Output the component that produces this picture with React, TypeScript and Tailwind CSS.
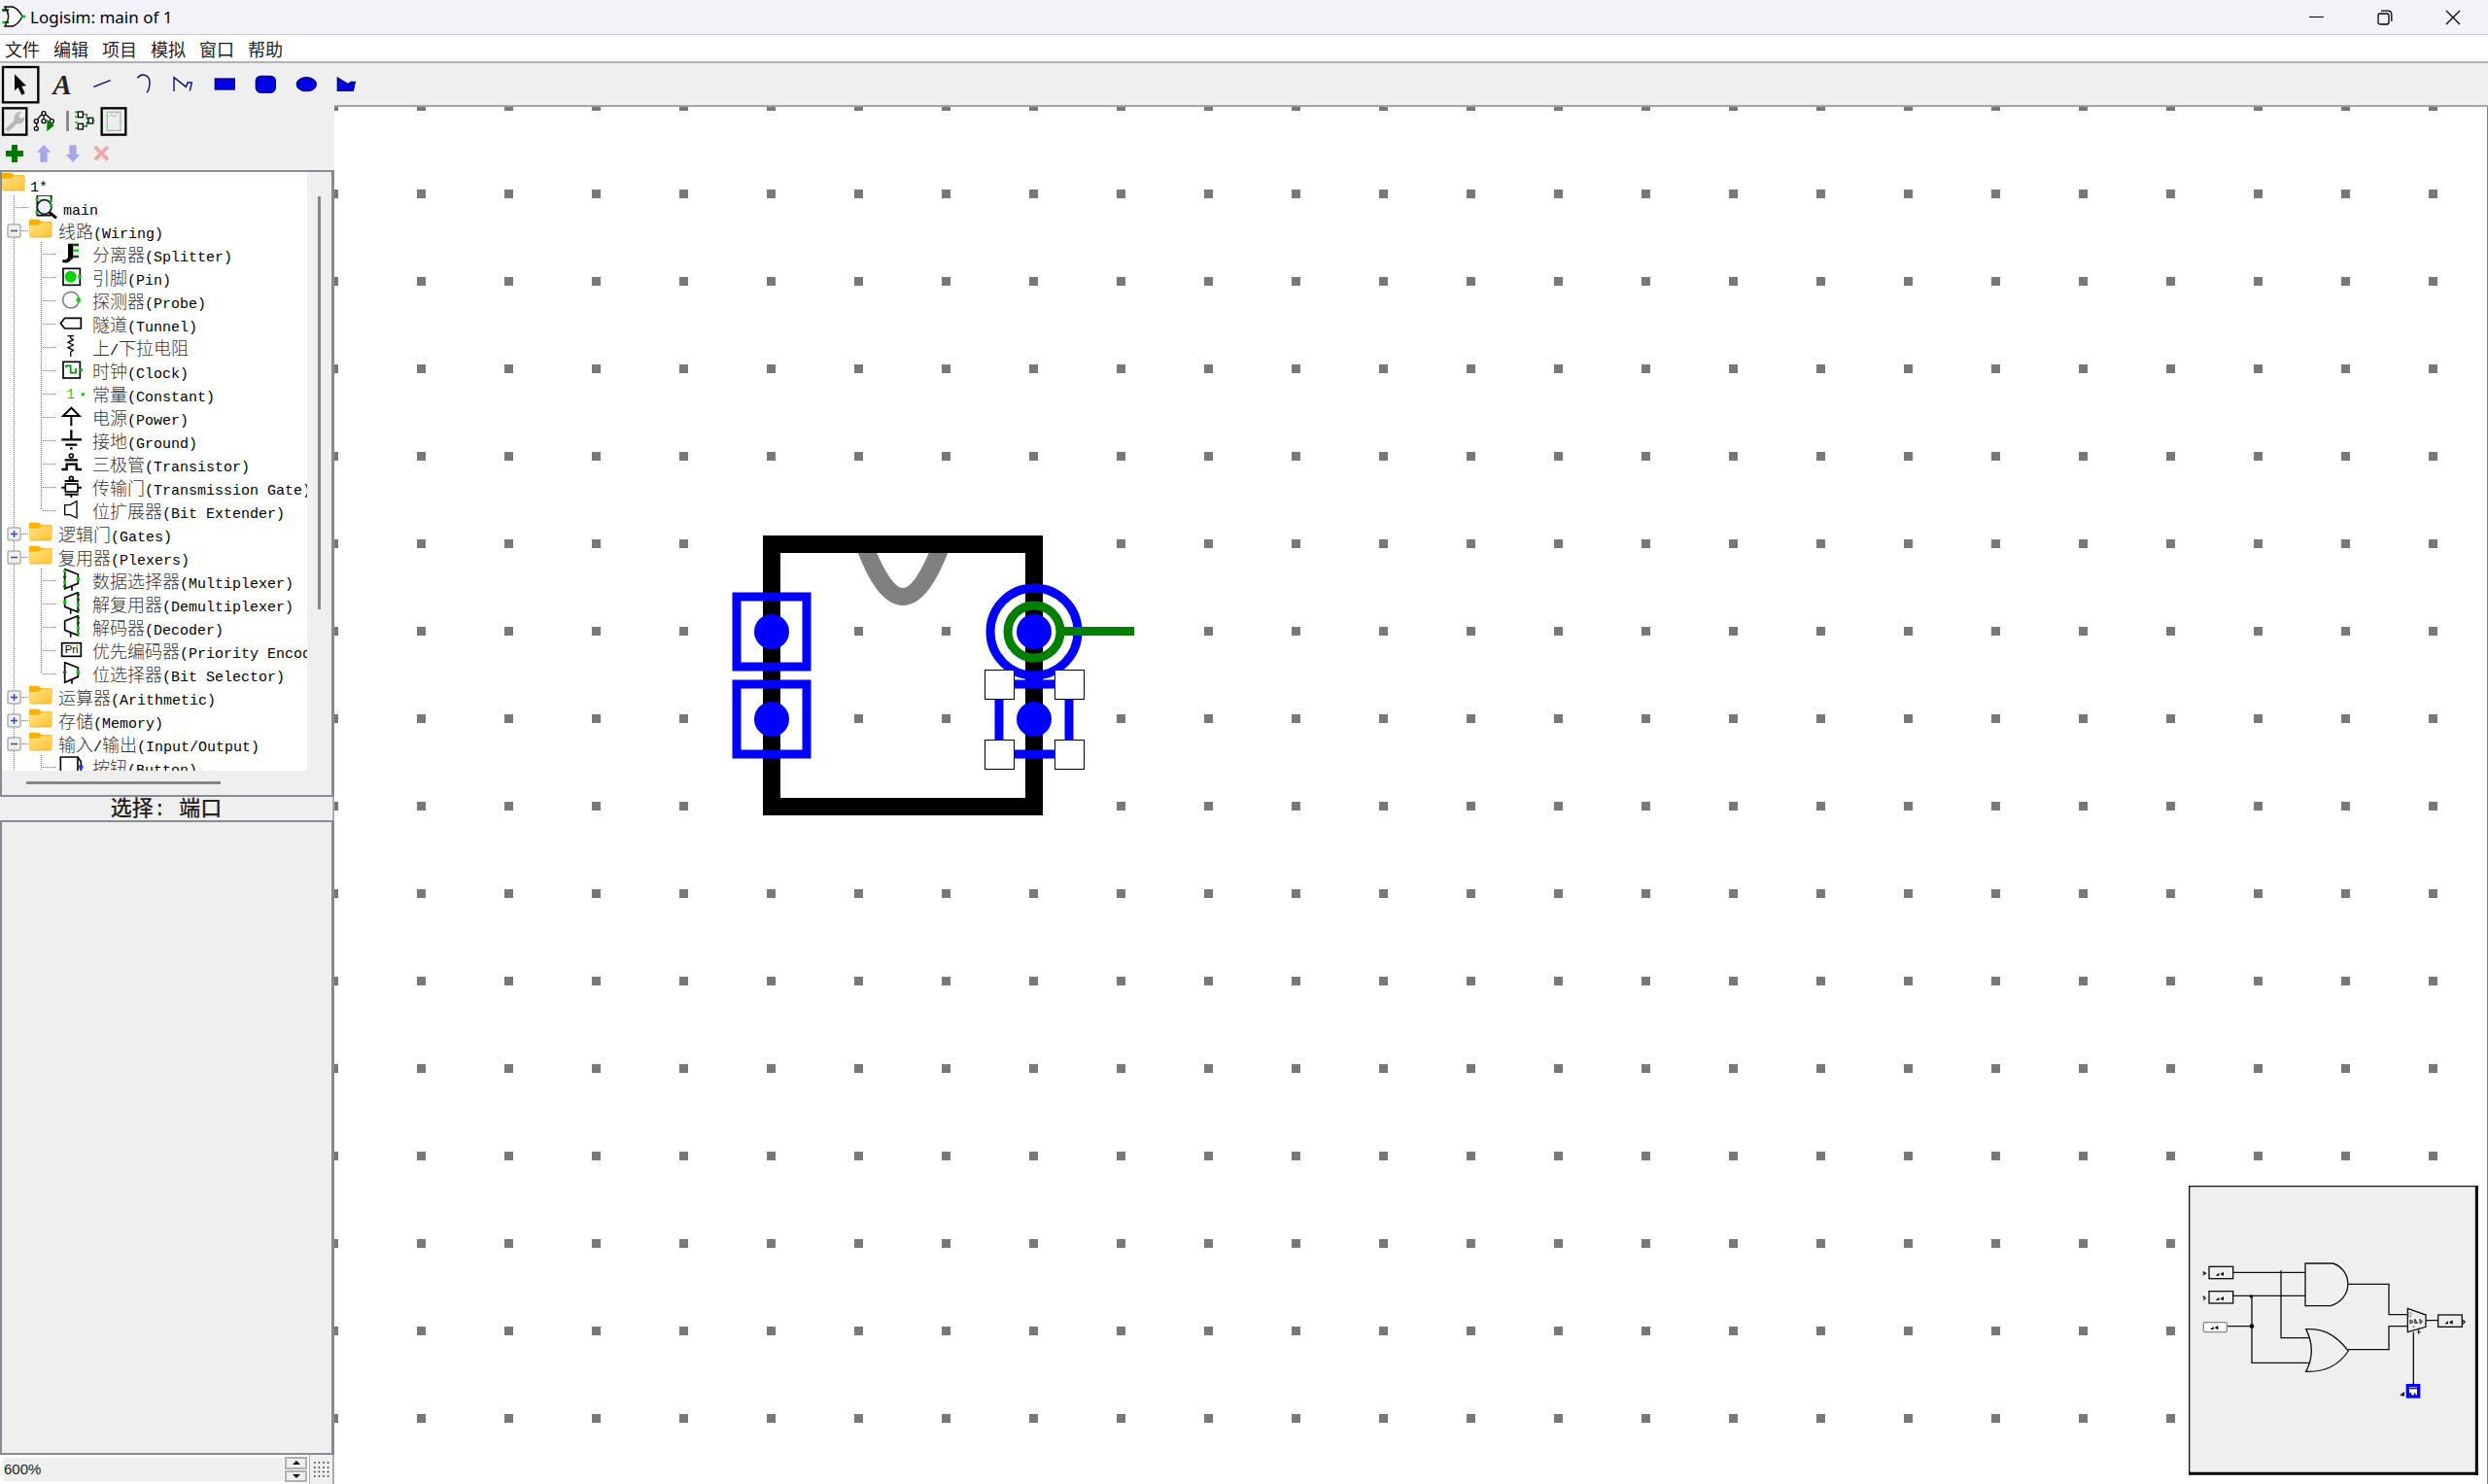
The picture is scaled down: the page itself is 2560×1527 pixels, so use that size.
import type { ReactNode } from 'react';

const LIME = '#00d400';
const DARK = '#006400';
const NAVY = '#000080';
const BLUE = '#0000ff';

/* ---------- text helpers ---------- */

// Splits a label into Chinese runs and Latin runs, which use different faces.
function Label({ text }: { text: string }) {
  const parts = text.match(/[\u4e00-\u9fff]+|[^\u4e00-\u9fff]+/g) ?? [];
  return (
    <span className="block font-['Noto_Sans_CJK_SC',sans-serif] text-lg leading-6 font-light whitespace-pre text-[#333333]">
      {parts.map((p, i) =>
        /[\u4e00-\u9fff]/.test(p) ? (
          <span key={i}>{p}</span>
        ) : (
          <span key={i} className="font-['Liberation_Mono',monospace] text-[15px] leading-none font-normal text-black">
            {p}
          </span>
        ),
      )}
    </span>
  );
}

/* ---------- title bar ---------- */

function TitleBar() {
  return (
    <header className="flex h-[35px] shrink-0 items-center bg-[#f1f3f9]">
      <svg width="26" height="26" viewBox="0 0 78 78" className="ml-px shrink-0">
        <path d="M4 16H22M4 54H22" stroke={LIME} strokeWidth="8" />
        <path d="M4 16H16" stroke={DARK} strokeWidth="8" />
        <path d="M12 6H36Q54 12 66 36Q54 60 36 66H12Q34 36 12 6Z" fill="#fff" stroke="#000" strokeWidth="4" />
        <path d="M12 16H24M12 54H24" stroke="#003c00" strokeWidth="6" />
        <path d="M64 36H76" stroke={LIME} strokeWidth="8" />
      </svg>
      <h1 className="ml-1 font-['Noto_Sans',sans-serif] text-[17px] leading-6 text-black">Logisim: main of 1</h1>
      <div className="ml-auto flex h-full pr-px">
        <button aria-label="Minimize" className="flex w-[70px] items-center justify-center">
          <svg width="16" height="16" viewBox="0 0 16 16">
            <path d="M0 7.5H15" stroke="#000" />
          </svg>
        </button>
        <button aria-label="Restore" className="flex w-[70px] items-center justify-center">
          <svg width="16" height="16" viewBox="0 0 16 16" fill="none" stroke="#000" strokeWidth="1.3">
            <rect x="1" y="4" width="11" height="11" rx="2" />
            <path d="M4 1.2H11Q14.8 1.2 14.8 5V12" />
          </svg>
        </button>
        <button aria-label="Close" className="flex w-[70px] items-center justify-center">
          <svg width="16" height="16" viewBox="0 0 16 16">
            <path d="M1 1L15 15M15 1L1 15" stroke="#000" strokeWidth="1.3" />
          </svg>
        </button>
      </div>
    </header>
  );
}

const MENUS = ['文件', '编辑', '项目', '模拟', '窗口', '帮助'];

function MenuBar() {
  return (
    <nav className="flex h-7 shrink-0 items-center gap-[14px] border-t border-[#c8cacf] bg-white pl-[5px]">
      {MENUS.map((m) => (
        <button key={m} className="font-['Noto_Sans_CJK_SC',sans-serif] text-lg leading-6 text-[#222222]">
          {m}
        </button>
      ))}
    </nav>
  );
}

/* ---------- drawing toolbar ---------- */

const TOOLS: { name: string; art: ReactNode }[] = [
  {
    name: 'Select',
    art: (
      <>
        <rect x="9" y="9" width="109" height="109" fill="none" stroke="#000" strokeWidth="7" />
        <path d="M45 31V82L56 72L67 95L77 90L67 68L81 67Z" fill="#000" />
      </>
    ),
  },
  {
    name: 'Text',
    art: (
      <text x="66" y="94" textAnchor="middle" fontSize="86" fontStyle="italic" fontWeight="bold" fill="#222" className="font-['Liberation_Serif',serif]">
        A
      </text>
    ),
  },
  { name: 'Line', art: <path d="M37 70L89 50" stroke={NAVY} strokeWidth="4" fill="none" /> },
  { name: 'Curve', art: <path d="M46 43C58 26 84 32 84 56C84 70 82 80 75 88" stroke={NAVY} strokeWidth="4" fill="none" /> },
  { name: 'Polyline', art: <path d="M33 84V41L70 70L76 56L88 57L82 82" stroke={NAVY} strokeWidth="4" fill="none" /> },
  { name: 'Rectangle', art: <rect x="34" y="45" width="60" height="33" fill="#0000e6" stroke={NAVY} strokeWidth="4" /> },
  {
    name: 'Rounded rectangle',
    art: <rect x="34" y="37" width="60" height="51" rx="15" fill="#0000e6" stroke={NAVY} strokeWidth="4" />,
  },
  { name: 'Oval', art: <ellipse cx="64" cy="62" rx="30" ry="21" fill="#0000e6" stroke={NAVY} strokeWidth="4" /> },
  {
    name: 'Polygon',
    art: <path d="M34 42L66 62L76 55H88L82 82H34Z" fill="#0000e6" stroke={NAVY} strokeWidth="4" />,
  },
];

function Toolbar() {
  return (
    <div className="flex h-[45px] shrink-0 items-center border-t-2 border-[#b4b4b4] bg-[#efefef]">
      {TOOLS.map((t) => (
        <button key={t.name} aria-label={t.name} title={t.name} className="shrink-0">
          <svg width="42" height="42" viewBox="0 0 126 126">
            {t.art}
          </svg>
        </button>
      ))}
    </div>
  );
}

/* ---------- explorer toolbars ---------- */

function Wrench() {
  return (
    <svg width="30" height="30" viewBox="0 0 90 90">
      <rect x="9" y="4" width="73" height="82" fill="#eee" stroke="#000" strokeWidth="7" />
      <path d="M17 67L44 42Q40 24 56 16L66 14L58 28L64 36L76 30Q78 50 58 53L52 52L27 76Q16 76 17 67Z" fill="#b8b8b8" />
    </svg>
  );
}

function Hierarchy() {
  return (
    <svg width="30" height="30" viewBox="0 0 90 90" fill="none" stroke="#000" strokeWidth="4">
      <path d="M38 24L26 38M52 24L68 38M45 28V36M23 50V60M68 50V60" />
      <circle cx="45" cy="20" r="6" fill="#fff" />
      <circle cx="22" cy="44" r="6" fill="#fff" />
      <circle cx="45" cy="44" r="6" fill="#fff" />
      <circle cx="70" cy="44" r="6" fill="#fff" />
      <circle cx="22" cy="67" r="6" fill="#fff" />
      <path d="M55 38V76L77 57Z" fill="#007a00" stroke="none" />
    </svg>
  );
}

function CircuitView() {
  return (
    <svg width="27" height="30" viewBox="0 0 81 90" fill="none">
      <path d="M6 16H16M6 30H16M6 48H16M6 66H16" stroke={LIME} strokeWidth="5" />
      <path d="M33 23H43V36H50M33 60H43V48H50" stroke="#009000" strokeWidth="4" />
      <path d="M60 42H68" stroke={LIME} strokeWidth="4" />
      <rect x="16" y="15" width="15" height="17" fill="#fff" stroke="#000" strokeWidth="4" />
      <rect x="16" y="52" width="15" height="17" fill="#fff" stroke="#000" strokeWidth="4" />
      <rect x="48" y="34" width="14" height="17" fill="#fff" stroke="#000" strokeWidth="4" />
    </svg>
  );
}

function ChipView() {
  return (
    <svg width="30" height="30" viewBox="0 0 90 90" fill="none">
      <rect x="8" y="4" width="74" height="82" fill="#eee" stroke="#000" strokeWidth="7" />
      <rect x="25" y="16" width="41" height="57" stroke="#b4b4b4" strokeWidth="4" />
      <path d="M37 18Q38 30 45 30Q52 30 54 18" stroke="#c8c8c8" strokeWidth="4" />
      <path d="M19 28H31M25 22V34M19 60H31M25 54V66M60 46H72M66 40V52" stroke="#90ee90" strokeWidth="4" />
    </svg>
  );
}

const EDITS: { name: string; art: ReactNode }[] = [
  { name: 'Add circuit', art: <path d="M36 18H54V36H72V54H54V72H36V54H18V36H36Z" fill="#007a00" /> },
  { name: 'Move up', art: <path d="M45 18L67 41H56V71H34V41H23Z" fill="#a6a6ea" /> },
  { name: 'Move down', art: <path d="M34 19H56V48H67L45 72L23 48H34Z" fill="#a6a6ea" /> },
  { name: 'Remove circuit', art: <path d="M23 24L63 64M63 24L23 64" stroke="#eea6a6" strokeWidth="11" /> },
];

/* ---------- component tree ---------- */

function Dot({ x, y, c = LIME, r = 5 }: { x: number; y: number; c?: string; r?: number }) {
  return <circle cx={x} cy={y} r={r} fill={c} stroke="none" />;
}

const ICONS: Record<string, ReactNode> = {
  splitter: (
    <>
      <path d="M46 5H30V48L24 55H13V64H30L46 50Z" fill="#000" stroke="none" />
      <path d="M46 9H63M46 45H63" stroke="#004b00" strokeWidth="8" />
      <path d="M46 26H63" stroke={LIME} strokeWidth="7" />
    </>
  ),
  pin: (
    <>
      <rect x="15" y="10" width="52" height="51" />
      <Dot x={38} y={35} r={18} />
      <Dot x={66} y={35} r={6} />
    </>
  ),
  probe: (
    <>
      <circle cx="39" cy="35" r="25" stroke="#808080" />
      <Dot x={62} y={35} r={7} />
    </>
  ),
  tunnel: <path d="M7 35L20 19H70V51H20Z" />,
  resistor: <path d="M28 2H48M38 2V8L46 14L30 22L46 30L30 38L46 46L38 52V66" strokeWidth="4" />,
  clock: (
    <>
      <rect x="15" y="10" width="52" height="50" />
      <path d="M24 28V22H38V44H54V30" stroke="#009000" />
      <Dot x={71} y={35} />
    </>
  ),
  constant: (
    <>
      <text x="38" y="52" textAnchor="middle" fontSize="42" fill={LIME} stroke="none" className="font-['Liberation_Mono',monospace]">
        1
      </text>
      <Dot x={76} y={38} />
    </>
  ),
  power: <path d="M40 8L15 33H65ZM40 34V64" strokeWidth="6" />,
  ground: <path d="M40 4V34M10 34H72M22 50H58M36 61H44" strokeWidth="7" />,
  transistor: (
    <>
      <circle cx="40" cy="12" r="6" />
      <path d="M20 25H60M10 54H26V38H56V54H72" strokeWidth="7" />
    </>
  ),
  transmission: (
    <>
      <circle cx="40" cy="10" r="6" />
      <path d="M20 18H62M10 38H22M60 38H72M20 59H62M40 59V68" strokeWidth="6" />
      <rect x="22" y="27" width="38" height="24" />
    </>
  ),
  extender: <path d="M20 20H36L57 8V60L36 50H20Z" strokeWidth="4" />,
  mux: (
    <>
      <path d="M20 2L61 18V46L20 62ZM42 54V68" />
      <Dot x={20} y={8} />
      <Dot x={20} y={26} c={DARK} />
      <Dot x={20} y={42} />
      <Dot x={20} y={55} c={DARK} />
      <Dot x={61} y={32} r={6} />
    </>
  ),
  demux: (
    <>
      <path d="M20 18L61 2V62L20 46ZM38 54V68" />
      <Dot x={61} y={8} c={DARK} />
      <Dot x={61} y={24} c={DARK} />
      <Dot x={61} y={40} />
      <Dot x={61} y={56} c={DARK} />
      <Dot x={20} y={32} r={6} />
    </>
  ),
  decoder: (
    <>
      <path d="M20 18L61 2V62L20 46ZM38 54V68" />
      <Dot x={61} y={8} c={DARK} />
      <Dot x={61} y={24} c={DARK} />
      <Dot x={61} y={40} />
      <Dot x={61} y={56} />
    </>
  ),
  priority: (
    <>
      <rect x="11" y="14" width="59" height="41" />
      <text x="41" y="46" textAnchor="middle" fontSize="34" fill="#000" stroke="none" className="font-['Liberation_Sans',sans-serif]">
        Pri
      </text>
    </>
  ),
  selector: (
    <>
      <path d="M20 2L61 18V46L20 64ZM42 54V68" />
      <Dot x={20} y={32} c={DARK} />
      <Dot x={61} y={32} r={6} />
    </>
  ),
  button: (
    <>
      <path d="M7 72V6H60V72M60 6L70 20V72" />
      <Dot x={70} y={36} r={7} c="#3030ff" />
    </>
  ),
};

function Folder() {
  return (
    <svg width="24" height="20" viewBox="0 0 72 60" className="mb-1 shrink-0">
      <defs>
        <linearGradient id="folder" x1="0" y1="0" x2="1" y2="1">
          <stop offset="0" stopColor="#ffe08a" />
          <stop offset="1" stopColor="#ffc42e" />
        </linearGradient>
      </defs>
      <path d="M0 6Q0 2 4 2H30L37 10H67Q71 10 71 14V30H0Z" fill="#f9b000" />
      <path d="M0 20H28L37 13H67Q71 13 71 17V53Q71 57 67 57H4Q0 57 0 53Z" fill="url(#folder)" />
      <path d="M3 57H68" stroke="#e0a020" strokeWidth="2" />
    </svg>
  );
}

type Row = { label: string; open?: boolean; icon?: string; last?: boolean };

const ROWS: Row[] = [
  { label: '线路(Wiring)', open: true },
  { label: '分离器(Splitter)', icon: 'splitter' },
  { label: '引脚(Pin)', icon: 'pin' },
  { label: '探测器(Probe)', icon: 'probe' },
  { label: '隧道(Tunnel)', icon: 'tunnel' },
  { label: '上/下拉电阻', icon: 'resistor' },
  { label: '时钟(Clock)', icon: 'clock' },
  { label: '常量(Constant)', icon: 'constant' },
  { label: '电源(Power)', icon: 'power' },
  { label: '接地(Ground)', icon: 'ground' },
  { label: '三极管(Transistor)', icon: 'transistor' },
  { label: '传输门(Transmission Gate)', icon: 'transmission' },
  { label: '位扩展器(Bit Extender)', icon: 'extender', last: true },
  { label: '逻辑门(Gates)', open: false },
  { label: '复用器(Plexers)', open: true },
  { label: '数据选择器(Multiplexer)', icon: 'mux' },
  { label: '解复用器(Demultiplexer)', icon: 'demux' },
  { label: '解码器(Decoder)', icon: 'decoder' },
  { label: '优先编码器(Priority Encoder)', icon: 'priority' },
  { label: '位选择器(Bit Selector)', icon: 'selector', last: true },
  { label: '运算器(Arithmetic)', open: false },
  { label: '存储(Memory)', open: false },
  { label: '输入/输出(Input/Output)', open: true },
  { label: '按钮(Button)', icon: 'button' },
];

function TreeRow({ row }: { row: Row }) {
  if (row.icon) {
    return (
      <li className="flex h-6 items-center">
        <svg width="58" height="24" viewBox="0 0 58 24" className="shrink-0" stroke="#707070" strokeDasharray="1 1">
          <path d="M12.5 0V24" />
          <path d={row.last ? 'M40.5 0V12' : 'M40.5 0V24'} />
          <path d="M42 12.5H56" />
        </svg>
        <svg width="27" height="24" viewBox="0 0 81 72" className="shrink-0" fill="none" stroke="#000" strokeWidth="5">
          {ICONS[row.icon]}
        </svg>
        <button className="ml-2">
          <Label text={row.label} />
        </button>
      </li>
    );
  }
  return (
    <li className="flex h-6 items-center">
      <button aria-label={row.open ? 'Collapse' : 'Expand'} className="shrink-0">
        <svg width="28" height="24" viewBox="0 0 28 24">
          <path d="M12.5 0V24M20 12.5H28" stroke="#707070" strokeDasharray="1 1" />
          <rect x="6" y="6" width="13" height="13" rx="1" fill="#f0f0f0" stroke="#8c8c8c" />
          <path d="M9 12.5H16" stroke="#2f4fae" strokeWidth="1.5" />
          {!row.open && <path d="M12.5 9V16" stroke="#2f4fae" strokeWidth="1.5" />}
        </svg>
      </button>
      <Folder />
      <button className="ml-[6px]">
        <Label text={row.label} />
      </button>
    </li>
  );
}

function Tree() {
  return (
    <div className="flex min-h-0 flex-[645] flex-col border-2 border-r-[3px] border-[#868b94] bg-[#efefef]">
      <div className="flex min-h-0 flex-1">
        <ul className="min-w-0 flex-1 overflow-hidden rounded-br-sm bg-white">
          <li className="flex h-6 items-center">
            <Folder />
            <button className="ml-[5px]">
              <Label text="1*" />
            </button>
          </li>
          <li className="flex h-6 items-center">
            <svg width="34" height="24" viewBox="0 0 34 24" className="shrink-0" stroke="#707070" strokeDasharray="1 1">
              <path d="M12.5 0V24M14 12.5H28" />
            </svg>
            <svg width="24" height="24" viewBox="0 0 72 72" className="shrink-0" fill="none">
              <path d="M7 0H50V20M7 0V62H50" stroke="#000" strokeWidth="5" />
              <circle cx="29" cy="36" r="22" fill="#eef0ff" stroke="#222" strokeWidth="5" />
              <path d="M44 52L66 70" stroke="#000" strokeWidth="9" />
              <Dot x={6} y={12} />
              <Dot x={50} y={14} />
              <Dot x={50} y={32} />
              <Dot x={6} y={52} />
            </svg>
            <button className="ml-[5px]">
              <Label text="main" />
            </button>
          </li>
          {ROWS.map((r) => (
            <TreeRow key={r.label} row={r} />
          ))}
        </ul>
        <div className="flex w-[25px] shrink-0 justify-center pt-[25px]">
          <div className="h-[425px] w-[3px] bg-[#858585]" />
        </div>
      </div>
      <div className="flex h-[25px] shrink-0 items-center pl-[25px]">
        <div className="h-[3px] w-[200px] bg-[#858585]" />
      </div>
    </div>
  );
}

function ZoomBar() {
  return (
    <div className="flex h-[30px] shrink-0 border-r-2 border-[#a9adb4] bg-white">
      <label className="flex min-w-0 flex-1 items-center pl-1">
        <span className="sr-only">Zoom</span>
        <input
          type="text"
          defaultValue="600%"
          className="h-6 w-full bg-[#efefef] font-['Liberation_Sans',sans-serif] text-[15px] leading-6 text-[#222222] outline-none"
        />
      </label>
      <div className="flex w-6 shrink-0 flex-col gap-px py-0.5 pl-px">
        <button aria-label="Zoom in" className="flex flex-1 items-center justify-center border-2 border-[#b0b0b0] bg-[#efefef]">
          <svg width="8" height="4" viewBox="0 0 8 4">
            <path d="M4 0L8 4H0Z" />
          </svg>
        </button>
        <button aria-label="Zoom out" className="flex flex-1 items-center justify-center border-2 border-[#b0b0b0] bg-[#efefef]">
          <svg width="8" height="4" viewBox="0 0 8 4">
            <path d="M0 0H8L4 4Z" />
          </svg>
        </button>
      </div>
      <button aria-label="Toggle grid" className="ml-0.5 flex w-6 shrink-0 items-center justify-center border-l border-[#a9adb4] bg-[#efefef]">
        <svg width="16" height="17" viewBox="0 0 16 17">
          <path d="M0 1H16M0 6H16M0 10.5H16M0 15H16" stroke="#222" strokeWidth="1.5" strokeDasharray="1.5 3.1" />
        </svg>
      </button>
    </div>
  );
}

function Sidebar() {
  return (
    <aside className="flex w-[344px] shrink-0 flex-col bg-[#efefef]">
      <div className="flex h-[33px] shrink-0 items-center">
        <button aria-label="Toolbox"><Wrench /></button>
        <button aria-label="Simulation tree"><Hierarchy /></button>
        <div className="flex w-[15px] justify-center pl-1">
          <div className="h-[21px] w-[3px] bg-[#8c8c8c]" />
        </div>
        <button aria-label="Edit circuit layout"><CircuitView /></button>
        <button aria-label="Edit circuit appearance"><ChipView /></button>
      </div>
      <div className="flex h-[34px] shrink-0 items-center">
        {EDITS.map((e) => (
          <button key={e.name} aria-label={e.name}>
            <svg width="30" height="30" viewBox="0 0 90 90">{e.art}</svg>
          </button>
        ))}
      </div>
      <Tree />
      <h2 className="flex h-6 shrink-0 items-center justify-center border-r-2 border-[#a9adb4] pt-1 font-['Liberation_Mono','Noto_Sans_CJK_SC',monospace] text-[22px] leading-6 font-medium whitespace-pre text-[#222222]">
        选择: 端口
      </h2>
      <div className="flex-[653] border-2 border-r-[3px] border-[#868b94]" />
      <ZoomBar />
    </aside>
  );
}

/* ---------- appearance canvas ---------- */

function Port({ x, y }: { x: number; y: number }) {
  return (
    <>
      <rect x={x - 36} y={y - 36} width="72" height="72" fill="none" stroke={BLUE} strokeWidth="9" />
      <circle cx={x} cy={y} r="18" fill={BLUE} />
    </>
  );
}

function Handle({ x, y }: { x: number; y: number }) {
  return <rect x={x} y={y} width="30" height="30" fill="#fff" stroke="#000" />;
}

function PinBox({ x, y }: { x: number; y: number }) {
  return (
    <>
      <rect x={x} y={y} width="74" height="37" />
      <path d={`M${x + 20} ${y + 28}l11 -9v9zM${x + 34} ${y + 23}l11 -7v13z`} fill="#000" stroke="none" />
    </>
  );
}

function Preview() {
  return (
    <svg
      viewBox="0 0 894 894"
      className="absolute right-[9px] bottom-[9px] size-[298px]"
      fill="none"
      stroke="#111"
      strokeWidth="4"
    >
      <rect width="894" height="894" fill="#efefef" stroke="none" />
      <path d="M0 2H894M2 0V894" />
      <path d="M889 0V894M0 889H894" stroke="#000" strokeWidth="9" />
      <path d="M138 268H360M138 340H360M285 262V470H372M195 340V547H372M119 434H195" />
      <path d="M360 240H446C508 262 508 350 438 371H360Z" />
      <path d="M362 443C410 440 450 455 493 510C460 560 415 576 362 574Q396 510 362 443Z" />
      <path d="M493 304H618V398H676M493 506H618V434H676M732 416H770M694 452V612" />
      <path d="M676 379L732 399V436L676 452Z" />
      <path d="M684 414l9 6l-9 6zM698 412l8 12h-8zM714 412l8 8l-8 6zM710 440v18M706 452h10" strokeWidth="3" />
      <path d="M679 392h8v12h-8zM690 436h8M694 432v8" stroke="#999" strokeWidth="3" />
      <PinBox x={63} y={250} />
      <PinBox x={63} y={326} />
      <PinBox x={770} y={399} />
      <rect x="46" y="422" width="72" height="30" rx="5" fill="#fff" stroke="#888" />
      <path d="M66 444l11 -9v9zM80 439l11 -7v13z" fill="#000" stroke="none" />
      <path d="M44 266l8 5l-8 5M44 341l7 6l-5 6M846 416l6 4l-5 7M656 646l8 -6v8z" />
      <circle cx="195" cy="434" r="5" fill="#000" />
      <circle cx="193" cy="342" r="3" fill="#000" />
      <rect x="676" y="617" width="34" height="34" fill="#fff" stroke={BLUE} strokeWidth="10" />
      <path d="M680 648v-6h6v6M698 648v-8M682 626h24" />
    </svg>
  );
}

function Canvas() {
  return (
    <main className="relative min-w-0 flex-1 border-r border-[#808080] bg-white">
      <svg className="block h-full w-full" aria-label="Circuit appearance">
        <defs>
          <pattern id="grid" x="-5" y="-5" width="90" height="90" patternUnits="userSpaceOnUse">
            <rect width="9" height="9" fill="#787878" />
          </pattern>
        </defs>
        <rect width="100%" height="100%" fill="url(#grid)" />
        <path d="M545 450Q585 558 625 450" fill="none" stroke="#808080" strokeWidth="18" />
        <rect x="450" y="450" width="270" height="270" fill="none" stroke="#000" strokeWidth="18" />
        <Port x={450} y={540} />
        <Port x={450} y={630} />
        <Port x={720} y={630} />
        <circle cx="720" cy="540" r="45" fill="none" stroke={BLUE} strokeWidth="9" />
        <circle cx="720" cy="540" r="18" fill={BLUE} />
        <circle cx="720" cy="540" r="27" fill="none" stroke="#008000" strokeWidth="9" />
        <path d="M747 539.5H823" stroke="#008000" strokeWidth="9" />
        <Handle x={669.5} y={579.5} />
        <Handle x={741.5} y={579.5} />
        <Handle x={669.5} y={651.5} />
        <Handle x={741.5} y={651.5} />
      </svg>
      <Preview />
    </main>
  );
}

export default function App() {
  return (
    <div className="flex h-screen flex-col overflow-hidden bg-[#efefef]">
      <TitleBar />
      <MenuBar />
      <Toolbar />
      <div className="flex min-h-0 flex-1">
        <Sidebar />
        <div className="flex min-w-0 flex-1 border-t-2 border-[#a0a4ab]">
          <Canvas />
        </div>
      </div>
    </div>
  );
}
